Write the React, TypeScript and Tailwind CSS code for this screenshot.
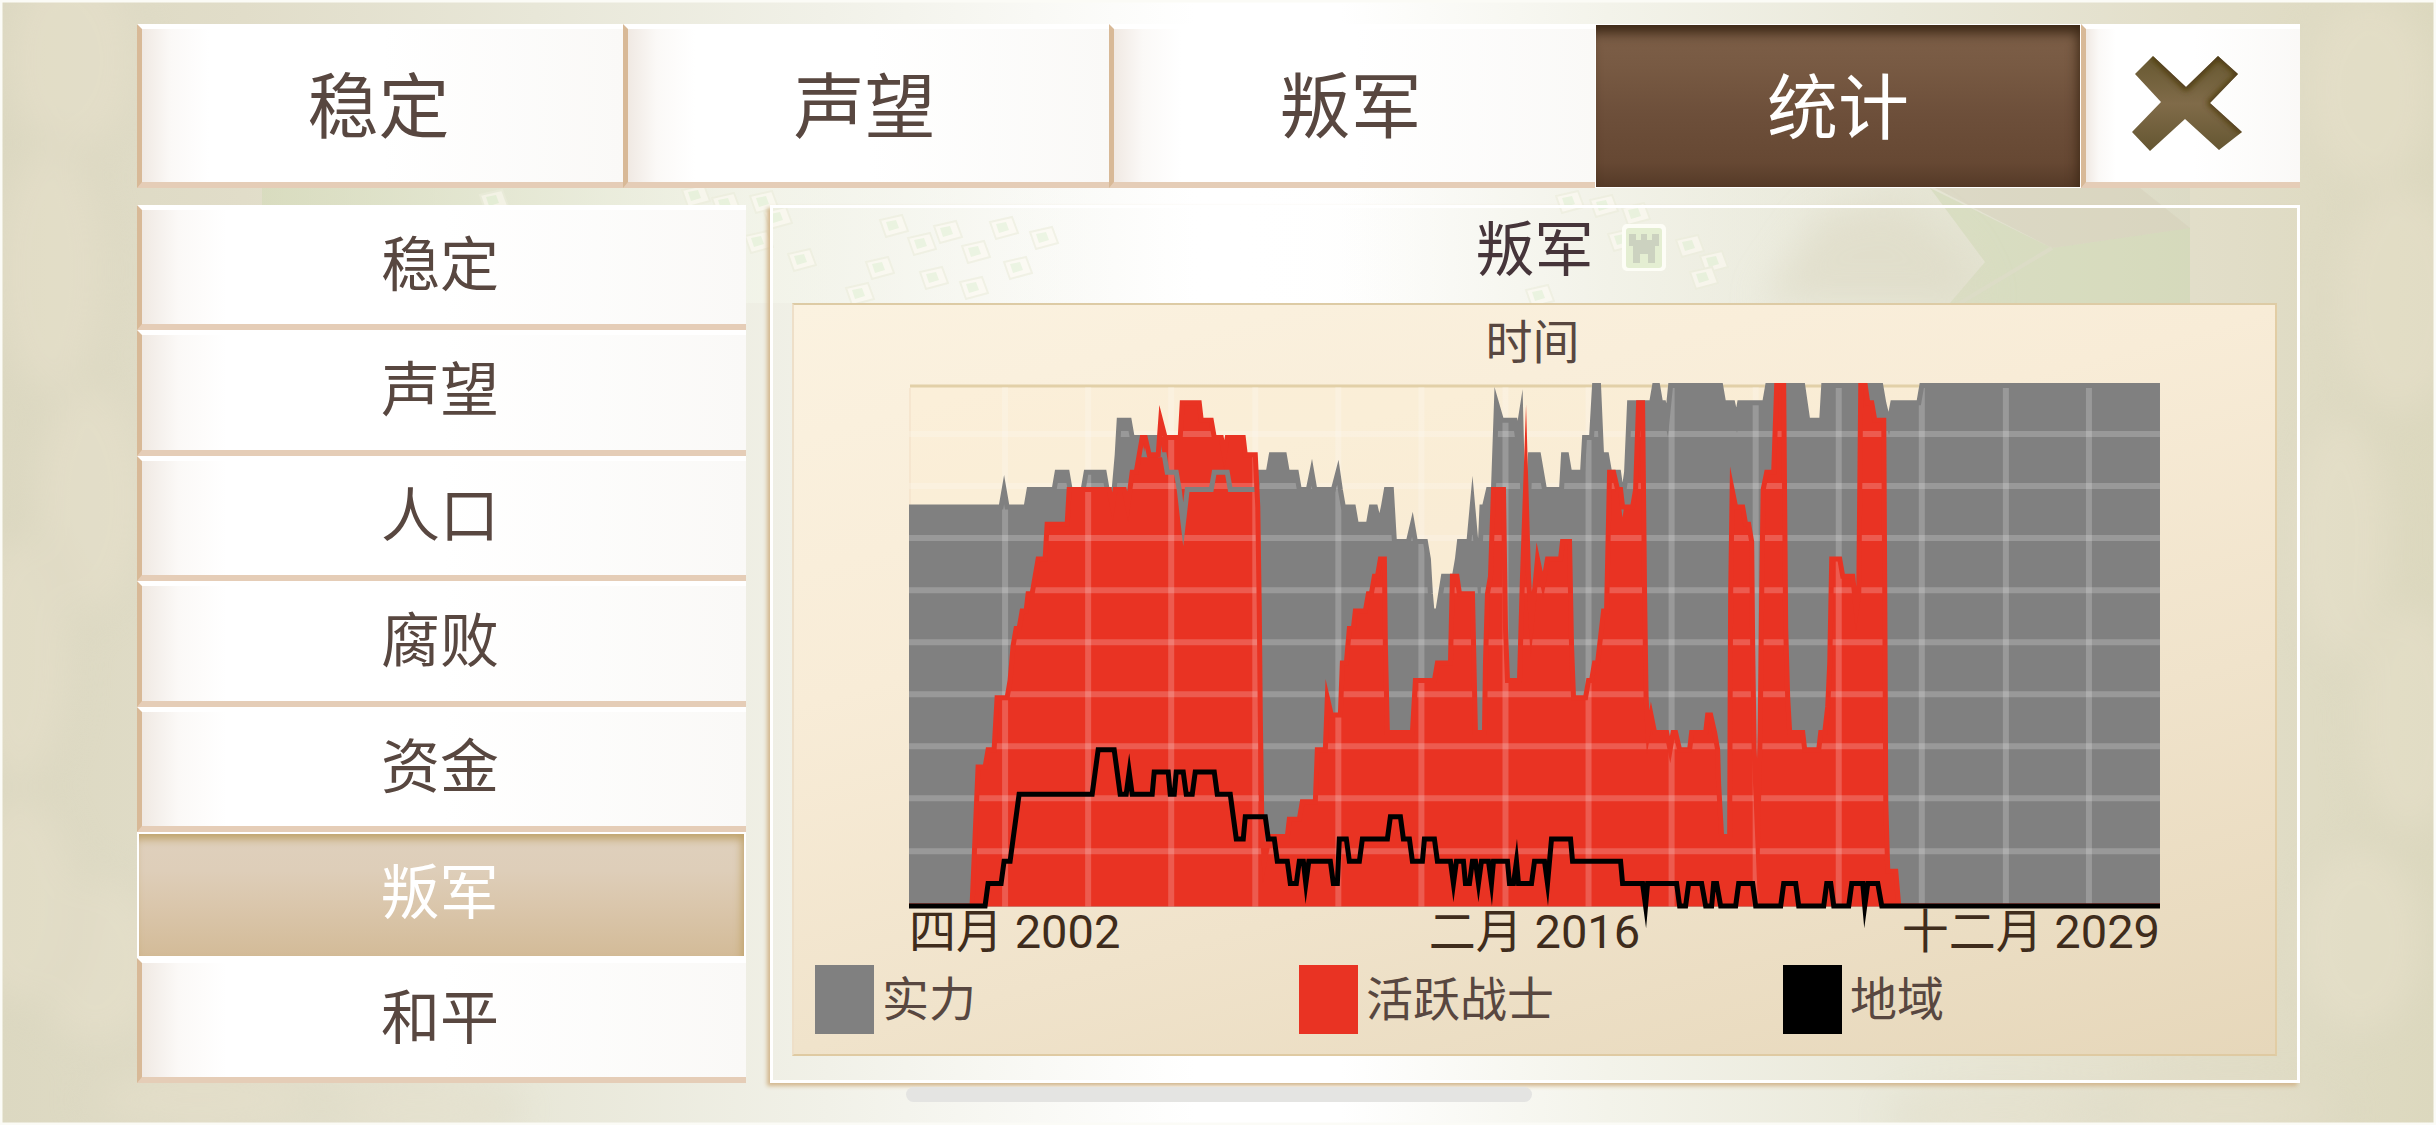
import React from "react";

type Point = [number, number];

const CHART_BASE = 522.5;
const STEP = 17.333;
const REGION_STEP = 22.3;

const strength: Point[] = [
  [0, 23], [92, 23], [95, 24], [98, 23], [117, 23], [120, 24], [145, 24], [148, 25], [158, 25], [161, 24],
  [174, 24], [177, 25], [195, 25], [198, 24], [205, 24], [208, 26], [210, 28], [220, 28], [223, 27],
  [230, 27], [233, 26], [237, 26], [240, 27], [248, 27], [251, 26], [255, 26], [258, 25], [267, 25], [270, 24],
  [274, 22], [278, 24], [302, 24], [305, 25], [318, 25], [321, 24], [347, 24], [350, 25], [359, 25], [362, 26],
  [375, 26], [378, 25], [387, 25], [390, 24], [399, 24], [402.5, 25], [405.5, 24], [424, 24], [428.5, 25],
  [431, 24], [434, 23], [444, 23], [447, 22], [459, 22], [462, 23], [466, 23], [470, 22], [474, 23], [477, 24],
  [482, 24], [485, 21], [499, 21], [503, 22], [506, 21], [516, 21], [519, 20], [521, 18], [522.5, 17],
  [528.5, 17], [534, 19], [545, 19], [548, 20], [550, 21], [559.5, 21], [563, 23.2], [569.5, 19], [572.5, 23],
  [575, 23], [579, 24], [584, 24], [587, 29], [592, 28], [605.5, 28], [608, 27], [611.3, 28.2], [614, 22],
  [617, 21], [621, 26], [629, 26], [635, 24], [652, 24], [654, 26], [657, 26], [660, 25], [673, 25], [675, 27],
  [682, 27], [685, 30], [689, 30], [692, 26], [697, 26], [700, 25], [709, 25], [713, 23.4], [717, 25],
  [720, 29], [742, 29], [745, 30], [748, 30], [751, 29], [754, 29], [757.5, 28], [761, 30], [811, 30],
  [814, 29], [823, 29], [827, 28], [830, 29], [855, 29], [858, 30], [893, 30], [898, 28], [912, 28], [914, 30],
  [971, 30], [974, 29], [979, 27.8], [983, 29], [1009, 29], [1012, 30], [1250, 30],
];

const fighters: Point[] = [
  [0, 0], [63, 0], [66, 4], [69, 8], [76, 8], [79, 9], [85, 9], [88, 12], [98, 12], [101, 13], [104, 15],
  [107, 16], [110, 16], [113, 17], [117, 17], [119, 18], [123, 18], [126, 19], [129, 20], [136, 20], [138, 22],
  [158, 22], [160, 24], [200, 24], [203.3, 23], [206, 24], [215, 24], [218.5, 23], [223, 25], [227, 25],
  [230, 26], [233, 27], [236, 27], [240, 26], [249, 26], [251.5, 28], [256, 27], [271, 27], [273, 29],
  [290, 29], [292, 28], [302, 28], [305, 27], [312, 27], [315, 26], [318, 27], [334, 27], [336, 26],
  [346, 26], [348.5, 23], [350, 17], [351, 11], [352.5, 5], [355, 2.5], [360, 4], [378, 4], [380, 5],
  [390, 5], [393, 6], [406, 6], [408, 9], [416, 9], [418, 12], [422, 11], [431, 11], [433, 14], [437, 14],
  [440, 16], [444, 16], [446, 17], [456, 17], [459, 18], [462, 18], [465, 19], [468, 19], [471, 20],
  [475, 20], [476, 15], [478, 10], [503, 10], [506, 13], [525, 13], [528, 14], [541, 14], [543, 19],
  [547.5, 19], [550, 18], [563, 18], [566, 10], [575, 10], [576, 14], [578, 18], [581, 19], [584, 24],
  [594, 24], [596, 16], [598, 13], [610, 13], [613, 19], [616.3, 24.4], [619, 19], [621.8, 16.2], [628, 20],
  [633.5, 18.5], [638, 20], [651, 20], [653, 21], [660, 21], [662, 15], [664, 12], [676, 12], [679, 13],
  [682, 13], [685, 14], [688, 14], [691, 15.5], [694, 17], [697, 17], [700, 25], [704, 25], [708, 24],
  [711, 24], [713, 23], [723, 23], [726, 24], [729, 29], [733, 29], [735, 18], [736.5, 12], [738.5, 10],
  [741.5, 11], [745, 10], [757, 10], [760.5, 9], [763.5, 10], [766, 10], [770, 9], [780, 9], [782, 10],
  [796, 10], [798, 11], [801, 11], [805, 10], [808, 9], [809, 7], [812, 4], [820, 4], [820.5, 12], [821, 18],
  [822.5, 24], [826, 23], [833, 23], [836, 22], [839, 22], [842, 21], [843, 15], [844.5, 9], [848, 4],
  [850.5, 10], [852, 18], [853.5, 24], [857, 25], [864, 25], [867, 30], [874, 30], [875, 23], [876, 16],
  [878, 12], [880, 10], [893, 10], [895, 9], [909, 9], [911, 10], [915, 10], [918, 11.5], [920, 14],
  [922, 20], [930, 20], [933, 19], [943, 19], [946.5, 17], [949, 18], [950, 24], [951, 30], [955.5, 30],
  [958, 29], [962, 29], [965, 28], [974, 28], [975, 18], [976, 6], [978, 2], [986, 2], [989, 0], [1250, 0],
];

const regions: Point[] = [
  [0, 0], [76, 0], [79, 1], [92, 1], [95, 2], [101, 2], [104, 3], [110, 5], [183, 5], [189, 7], [205, 7],
  [211, 5], [217, 5], [220, 6], [223, 5], [243, 5], [245, 6], [259, 6], [261, 5], [265, 5], [267, 6],
  [274, 6], [277, 5], [283, 5], [286, 6], [305, 6], [308, 5], [321, 5], [327, 3], [334, 3], [336, 4],
  [356, 4], [359, 3], [365, 3], [368, 2], [378, 2], [381, 1], [387, 1], [390, 2], [394, 2], [396.5, 1],
  [399.5, 2], [421, 2], [424, 1], [428, 1], [430, 3], [437, 3], [440, 2], [450, 2], [453, 3], [478, 3],
  [481, 4], [491, 4], [494, 3], [500, 3], [503, 2], [513, 2], [515, 3], [525, 3], [528, 2], [541, 2],
  [544, 1], [547, 2], [554, 2], [556, 1], [560, 1], [563, 2], [566, 2], [569, 1], [572, 2], [579, 2],
  [582, 1], [584, 2], [598, 2], [600, 1], [604, 1], [607, 2], [609, 1], [622, 1], [625, 2], [635, 2],
  [638, 1], [642, 3], [661, 3], [663, 2], [711, 2], [713, 1], [733, 1], [736, 0], [738, 1], [767, 1],
  [770, 0], [776, 0], [779, 1], [792, 1], [796, 0], [802, 0], [804, 1], [807, 1], [811, 0], [826, 0],
  [829, 1], [843, 1], [846, 0], [871, 0], [874, 1], [886, 1], [889, 0], [914, 0], [917, 1], [921, 1],
  [924, 0], [939, 0], [942, 1], [953, 1], [955, 0], [958, 1], [968, 1], [972, 0], [1250, 0],
];

const toPath = (points: Point[], step: number) =>
  points.map(([x, v], i) => `${i ? "L" : "M"}${x} ${(CHART_BASE - v * step).toFixed(1)}`).join("");

const toArea = (points: Point[]) => `${toPath(points, STEP)}V523H0Z`;

const gridX = [96, 179, 262, 346, 429, 512, 596, 679, 762, 846, 929, 1012, 1096, 1179];
const gridY = [51, 103, 155, 207, 259, 311, 363, 415, 468];

const tabs = ["稳定", "声望", "叛军", "统计"];
const sections = ["稳定", "声望", "人口", "腐败", "资金", "叛军", "和平"];
const legend = [
  { label: "实力", swatch: "bg-[#808080]" },
  { label: "活跃战士", swatch: "bg-[#e93323]" },
  { label: "地域", swatch: "bg-black" },
];

const raised =
  "border-t-[5px] border-b-[6px] border-l-[5px] border-t-white border-b-[#e5cdb7] border-l-[#d8b997] bg-[linear-gradient(90deg,#f0e9e3_0%,#fbf9f7_6%,#ffffff_14%,#ffffff_50%,#faf9f7_100%)] text-[#584740]";

function Backdrop() {
  const blobs = [
    [70, 60, 70, 100], [50, 270, 60, 130], [90, 500, 60, 120], [20, 660, 55, 130], [95, 960, 70, 90],
    [20, 900, 60, 110], [200, 1100, 120, 30], [420, 1110, 100, 22], [2370, 90, 70, 100], [2400, 300, 70, 120],
    [2340, 540, 55, 130], [2410, 720, 60, 120], [2360, 940, 70, 100], [2230, 1110, 120, 26],
    [2000, 1115, 110, 20],
  ];
  const houses = [
    [480, 195], [682, 190], [712, 198], [750, 196], [764, 212], [745, 236], [788, 254], [880, 220], [908, 238],
    [866, 262], [934, 226], [962, 246], [990, 222], [920, 272], [1004, 262], [846, 288], [960, 282], [1030, 232],
    [1556, 196], [1590, 200], [1622, 208], [1608, 234], [1676, 240], [1700, 256], [1690, 272], [1526, 290],
  ];
  return (
    <svg
      className="pointer-events-none absolute inset-0 h-full w-full"
      viewBox="0 0 2436 1125"
      preserveAspectRatio="none"
      aria-hidden="true"
    >
      <defs>
        <filter id="soft" x="-30%" y="-30%" width="160%" height="160%">
          <feGaussianBlur stdDeviation="18" />
        </filter>
        <linearGradient id="map" x1="0" x2="1" y1="0" y2="0">
          <stop offset="0" stopColor="#d3dbb8" stopOpacity="0.6" />
          <stop offset="0.25" stopColor="#f3f5ea" stopOpacity="0.7" />
          <stop offset="0.5" stopColor="#ffffff" stopOpacity="0" />
          <stop offset="0.7" stopColor="#f1f1e6" stopOpacity="0.5" />
          <stop offset="1" stopColor="#d8d8c2" stopOpacity="0.6" />
        </linearGradient>
      </defs>
      <g fill="#e9e2cd" stroke="#cfcdb6" strokeWidth="8" opacity="0.45" filter="url(#soft)">
        {blobs.map(([x, y, rx, ry]) => (
          <ellipse key={`${x}-${y}`} cx={x} cy={y} rx={rx} ry={ry} />
        ))}
      </g>
      <rect x="262" y="186" width="1928" height="117" fill="url(#map)" />
      <g fill="#fdfaf2" stroke="#eceddc" strokeWidth="2" opacity="0.6">
        {houses.map(([x, y]) => (
          <g key={`${x}-${y}`}>
            <path d={`M${x} ${y}l22 -5 6 16 -22 6z`} />
            <path d={`M${x + 6} ${y + 2}l10 -2 3 8 -10 3z`} fill="#e4f2d8" stroke="none" />
          </g>
        ))}
      </g>
      <path d="M1930 188L2052 248L2190 228V303H1950L1985 262Z" fill="#cfd8b4" opacity="0.55" />
      <path d="M1935 188H2140L2190 228L2052 248Z" fill="#d6cfba" opacity="0.55" />
      <path d="M1760 303L1820 215L1900 200L1960 250L1985 303Z" fill="#ddd9c4" opacity="0.6" filter="url(#soft)" />
      <path d="M2052 248L1960 303" stroke="#dcdcc6" strokeWidth="4" fill="none" />
      <rect x="1622" y="224" width="44" height="47" rx="5" fill="#fdfdf6" />
      <rect x="1626" y="228" width="36" height="40" rx="3" fill="#e4eed2" />
      <path d="M1629 234h7v6h5v-6h6v6h5v-6h7v12h-4v17h-7v-9h-8v9h-7v-17h-4z" fill="#ccd2c0" />
      <rect x="1" y="1" width="2434" height="1123" fill="none" stroke="#fbfbf6" strokeWidth="3" />
    </svg>
  );
}

function CloseIcon() {
  return (
    <svg className="h-[98px] w-[112px]" viewBox="0 0 112 98" aria-hidden="true">
      <defs>
        <linearGradient id="olive" x1="0" x2="0" y1="0" y2="1">
          <stop offset="0" stopColor="#665830" />
          <stop offset="0.5" stopColor="#806b49" />
          <stop offset="1" stopColor="#635530" />
        </linearGradient>
        <clipPath id="cross">
          <path d="M22 1L4 19L30 47L1 77L19 96L54 64L88 95L111 77L79 48L107 19L87 1L55 32Z" />
        </clipPath>
        <filter id="edge">
          <feGaussianBlur stdDeviation="3" />
        </filter>
      </defs>
      <g clipPath="url(#cross)">
        <rect width="112" height="98" fill="url(#olive)" />
        <path
          d="M22 0L55 32L87 0L109 19L80 48L112 77"
          fill="none"
          stroke="#4a3608"
          strokeWidth="6"
          filter="url(#edge)"
        />
      </g>
    </svg>
  );
}

function Chart() {
  return (
    <svg className="block h-auto w-full overflow-visible" viewBox="0 0 1250 524" role="img" aria-label="叛军">
      <defs>
        <clipPath id="plot">
          <rect x="0" y="-6" width="1250" height="529" />
        </clipPath>
      </defs>
      <rect x="1" y="3" width="1249" height="520" fill="#fbedd2" opacity="0.35" />
      <path d="M1 3H1250" stroke="#e2d0a8" strokeWidth="3" />
      <path d="M1 5V523" stroke="#f6e6cf" strokeWidth="2" />
      <path d={toArea(strength)} fill="#808080" />
      <path d={toArea(fighters)} fill="#e93323" />
      <g stroke="#ffffff" strokeOpacity="0.2" strokeWidth="6">
        {gridX.map((x) => (
          <path key={x} d={`M${x} 4V523`} />
        ))}
        {gridY.map((y) => (
          <path key={y} d={`M0 ${y}H1250`} />
        ))}
      </g>
      <g fill="none" strokeWidth="5" strokeLinejoin="miter" strokeMiterlimit="24" clipPath="url(#plot)">
        <path d={toPath(strength, STEP)} stroke="#808080" />
        <path d={toPath(fighters, STEP)} stroke="#e93323" strokeMiterlimit="60" />
      </g>
      <path
        d={toPath(regions, REGION_STEP)}
        fill="none"
        stroke="#000000"
        strokeWidth="5"
        strokeLinejoin="miter"
        strokeMiterlimit="24"
      />
    </svg>
  );
}

export default function App() {
  return (
    <div className="relative min-h-screen overflow-hidden bg-[linear-gradient(90deg,#dcd8c1_0%,#e1ddc9_10%,#e8e7d8_22%,#f1f1e8_34%,#ffffff_49%,#ffffff_55%,#f3f3ea_66%,#e9e8d9_78%,#e2dec9_90%,#dcd8be_100%)] font-['Roboto','Noto_Sans_CJK_SC',sans-serif]">
      <Backdrop />
      <div className="relative flex flex-col pt-6 pr-[136px] pl-[137px]">
        <nav className="flex h-[164px]">
          <div className="grid flex-1 grid-cols-4">
            {tabs.map((tab, i) =>
              i === 3 ? (
                <button
                  key={tab}
                  aria-current="page"
                  className="border border-white bg-[linear-gradient(180deg,#7d5f48_0%,#785a43_25%,#6d4f3a_55%,#664833_85%,#553a27_100%)] pt-1 text-[71px] leading-none text-white shadow-[inset_-4px_10px_12px_-2px_#3c2816]"
                >
                  {tab}
                </button>
              ) : (
                <button key={tab} className={`pt-1 pr-2 text-[71px] leading-none ${raised}`}>
                  {tab}
                </button>
              ),
            )}
          </div>
          <button aria-label="关闭" className={`flex w-[219px] items-center justify-center pr-3 pb-1 ${raised}`}>
            <CloseIcon />
          </button>
        </nav>

        <div className="mt-[17px] flex gap-6">
          <aside className="grid w-[609px] auto-rows-fr">
            {sections.map((name) =>
              name === "叛军" ? (
                <button
                  key={name}
                  aria-current="true"
                  className="border-2 border-white bg-[linear-gradient(180deg,#dfd0bd_0%,#deceb9_30%,#dac6ab_60%,#d3bb98_100%)] pr-1 pb-1 text-[59px] leading-none text-white shadow-[inset_-3px_6px_8px_-1px_#bfa269]"
                >
                  {name}
                </button>
              ) : (
                <button key={name} className={`pr-2 pb-1 text-[59px] leading-none ${raised}`}>
                  {name}
                </button>
              ),
            )}
          </aside>

          <main className="flex-1 border-[3px] border-white pr-5 pb-6 pl-[19px] shadow-[-3px_3px_4px_#d3b88f]">
            <h1 className="h-[95px] text-center text-[59px] leading-[86px] text-[#46353a]">叛军</h1>
            <section className="border-2 border-t-[#ddcba5] border-r-[#e2cda4] border-b-[#dfcaa2] border-l-[#eedfc8] bg-[linear-gradient(165deg,#fbf2e0_0%,#f8ecd7_35%,#f0e3cb_65%,#e6d7ba_100%)] pb-5">
              <h2 className="h-[78px] pr-1 text-center text-[47px] leading-[76px] text-[#584740]">时间</h2>
              <div className="px-[115px]">
                <Chart />
                <div className="grid grid-cols-3 text-[47px] leading-[50px] whitespace-nowrap text-[#3f2c1c]">
                  <span>四月 2002</span>
                  <span className="text-center">二月 2016</span>
                  <span className="text-right">十二月 2029</span>
                </div>
              </div>
              <ul className="mt-2 grid grid-cols-3 pr-2 pl-[21px]">
                {legend.map(({ label, swatch }) => (
                  <li key={label} className="flex items-center gap-2 text-[47px] leading-[69px] text-[#584740]">
                    <span className={`h-[69px] w-[59px] ${swatch}`} />
                    {label}
                  </li>
                ))}
              </ul>
            </section>
          </main>
        </div>
        <div className="mx-auto mt-1 h-[15px] w-[626px] rounded-full bg-[#e4e4e2]" />
      </div>
    </div>
  );
}
